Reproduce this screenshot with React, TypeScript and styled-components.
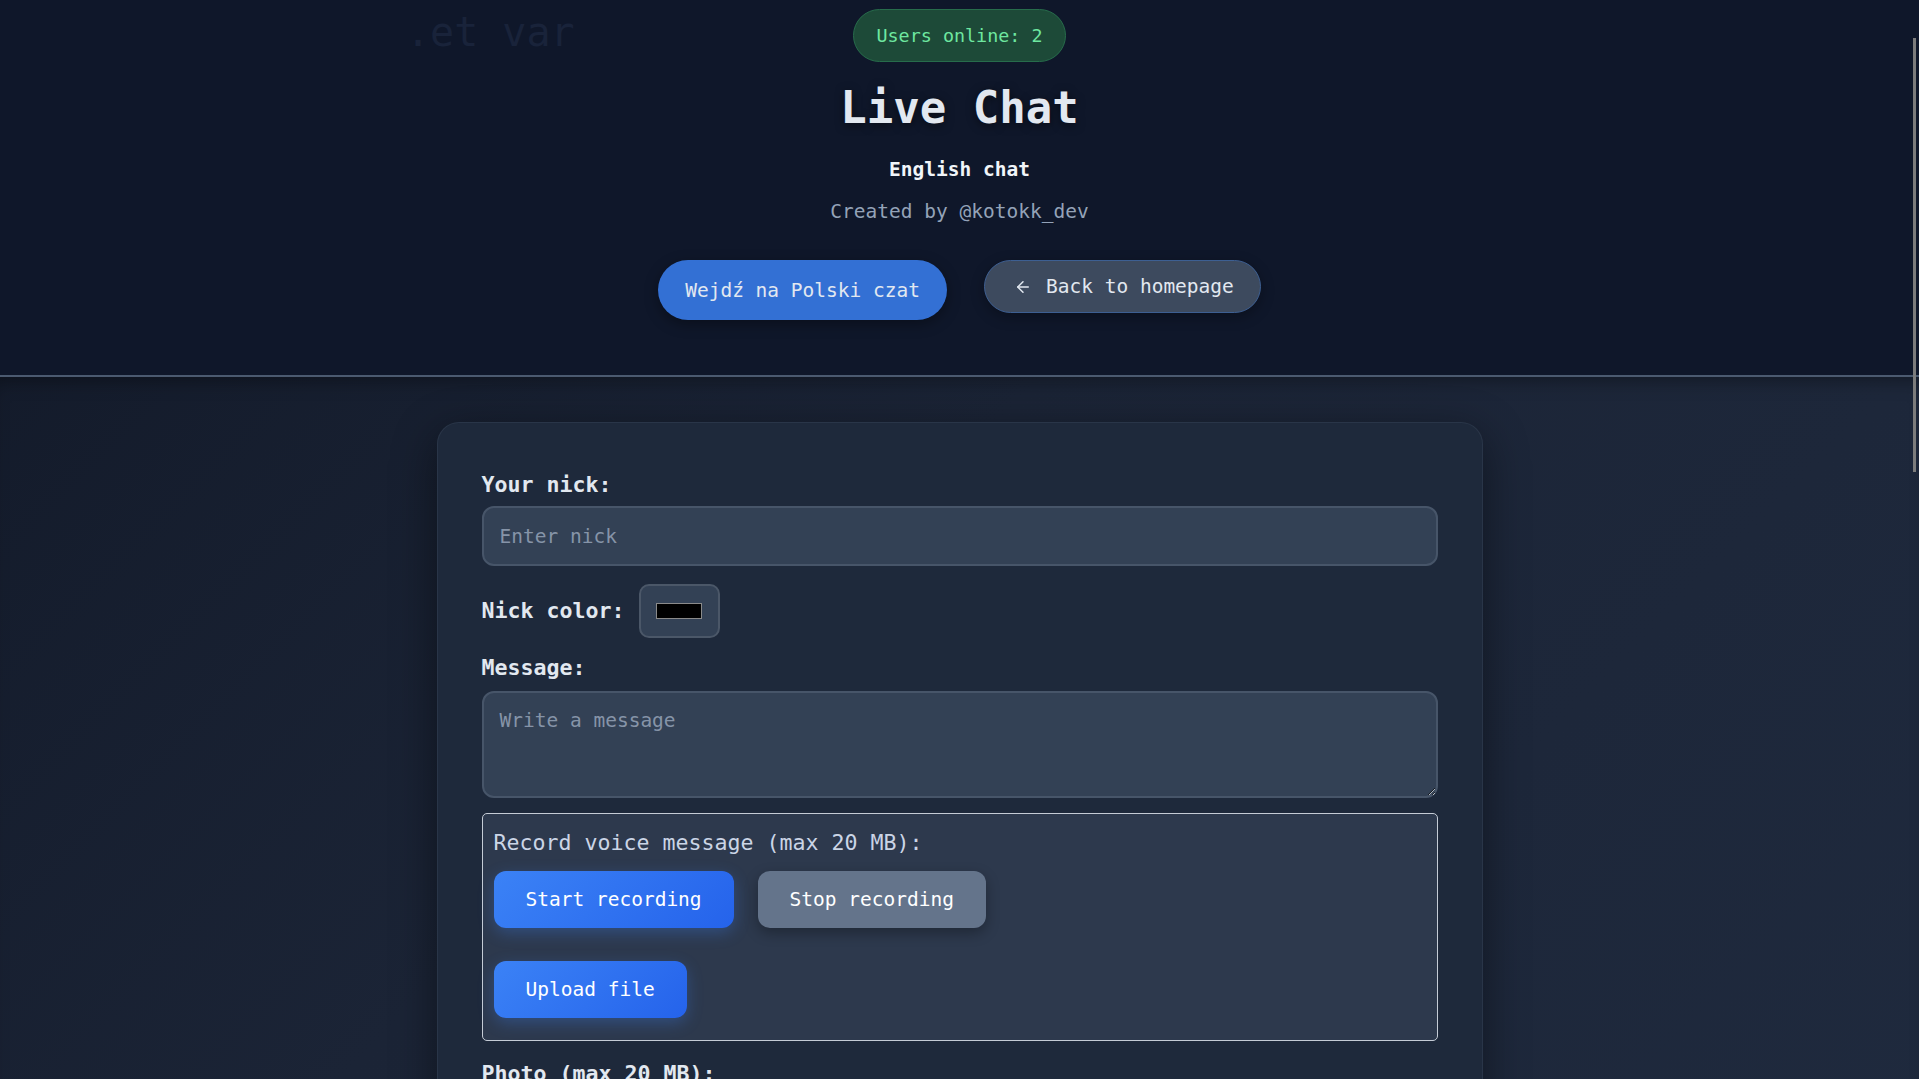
import React from "react";
import styled, { createGlobalStyle } from "styled-components";
import { ArrowLeft } from "lucide-react";

const GlobalStyle = createGlobalStyle`
  html, body {
    margin: 0;
    padding: 0;
    scrollbar-width: none;
  }
  html::-webkit-scrollbar, body::-webkit-scrollbar { display: none; width: 0; }
  body {
    background: linear-gradient(135deg, #111827 0%, #1b2436 45%, #1f2a3e 100%);
    font-family: "DejaVu Sans Mono", "Liberation Mono", monospace;
    color: #e2e8f0;
  }
  * { box-sizing: border-box; }
`;

const Header = styled.header`
  position: relative;
  background: #0f172a;
  height: 377px;
  border-bottom: 2px solid #4b5a70;
  display: flex;
  flex-direction: column;
  align-items: center;
  padding-top: 9px;
  overflow: hidden;
`;

const GhostCode = styled.div`
  position: absolute;
  left: 406px;
  top: 5px;
  font-size: 40px;
  line-height: 54px;
  color: #19233a;
  white-space: pre;
  pointer-events: none;
`;

const OnlineBadge = styled.div`
  height: 53px;
  padding: 0 22px;
  border-radius: 27px;
  background: #1d4a38;
  border: 1px solid #276c4b;
  color: #6ee7a0;
  font-size: 18.4px;
  line-height: 51px;
  position: relative;
`;

const Title = styled.h1`
  margin: 21px 0 0;
  font-size: 44px;
  line-height: 50px;
  font-weight: 700;
  color: #e2e8f0;
  text-shadow: 0 2px 10px rgba(0, 0, 0, 0.55);
`;

const Subtitle = styled.div`
  margin-top: 25px;
  font-size: 19.5px;
  line-height: 24px;
  font-weight: 700;
  color: #f1f5f9;
`;

const Credit = styled.div`
  margin-top: 18px;
  font-size: 19.5px;
  line-height: 24px;
  color: #94a3b8;
`;

const NavRow = styled.div`
  margin-top: 36px;
  display: flex;
  align-items: flex-start;
  gap: 37px;
`;

const PillButton = styled.button<{ $variant: "primary" | "ghost" }>`
  font-family: inherit;
  font-size: 19.5px;
  display: flex;
  align-items: center;
  gap: 14px;
  cursor: pointer;
  color: #e2e8f0;
  border-radius: 30px;
  ${(p) =>
    p.$variant === "primary"
      ? `
    height: 60px;
    padding: 0 27px;
    background: #3370d4;
    border: none;
    box-shadow: 0 4px 14px rgba(0,0,0,0.35);
  `
      : `
    height: 53px;
    padding: 0 26px 0 29px;
    background: #3d4a5e;
    border: 1px solid #3d5f92;
    box-shadow: 0 4px 14px rgba(0,0,0,0.3);
  `}
`;

const Main = styled.main`
  display: flex;
  justify-content: center;
  padding: 45px 0 60px;
  box-shadow: inset 0 14px 18px -10px rgba(0, 0, 0, 0.35);
`;

const Card = styled.section`
  width: 1046px;
  background: #1e293b;
  border: 1px solid rgba(148, 163, 184, 0.1);
  border-radius: 22px;
  padding: 49px 44px 45px;
  box-shadow: 0 12px 45px rgba(0, 0, 0, 0.45);
  display: flex;
  flex-direction: column;
`;

const Label = styled.label<{ $gap?: number; $after?: number }>`
  display: block;
  font-size: 21.6px;
  line-height: 26px;
  font-weight: 700;
  color: #e2e8f0;
  margin-top: ${(p) => p.$gap ?? 0}px;
  margin-bottom: ${(p) => p.$after ?? 8}px;
`;

const TextInput = styled.input`
  width: 100%;
  height: 60px;
  background: #334155;
  border: 2px solid #475569;
  border-radius: 12px;
  padding: 0 16px;
  font-family: inherit;
  font-size: 19.5px;
  color: #e2e8f0;
  &::placeholder { color: #8694a8; }
  outline: none;
`;

const ColorRow = styled.div`
  margin-top: 18px;
  display: flex;
  align-items: center;
  gap: 14px;
`;

const InlineLabel = styled.span`
  font-size: 21.6px;
  line-height: 26px;
  font-weight: 700;
  color: #e2e8f0;
`;

const ColorBox = styled.div`
  width: 81px;
  height: 54px;
  background: #334155;
  border: 2px solid #4b5768;
  border-radius: 10px;
  display: flex;
  align-items: center;
  justify-content: center;
`;

const Swatch = styled.div<{ $color: string }>`
  width: 46px;
  height: 16px;
  background: ${(p) => p.$color};
  border: 1px solid #8a8a8a;
`;

const TextArea = styled.textarea`
  width: 100%;
  height: 107px;
  background: #334155;
  border: 2px solid #475569;
  border-radius: 12px;
  padding: 16px 16px;
  font-family: inherit;
  font-size: 19.5px;
  line-height: 24px;
  color: #e2e8f0;
  &::placeholder { color: #8694a8; }
  outline: none;
  resize: vertical;
  display: block;
`;

const VoiceBox = styled.div`
  margin-top: 15px;
  background: #2d394d;
  border: 1px solid #c5ccd6;
  border-radius: 5px;
  padding: 16px 11px 22px;
  display: flex;
  flex-direction: column;
`;

const VoiceTitle = styled.div`
  font-size: 21.6px;
  line-height: 26px;
  color: #cbd5e6;
`;

const ButtonRow = styled.div<{ $top: number }>`
  margin-top: ${(p) => p.$top}px;
  display: flex;
  gap: 24px;
`;

const ActionButton = styled.button<{ $tone: "blue" | "gray" }>`
  height: 57px;
  padding: 0 32px;
  border: none;
  border-radius: 12px;
  font-family: inherit;
  font-size: 19.5px;
  color: #ffffff;
  cursor: pointer;
  background: ${(p) =>
    p.$tone === "blue"
      ? "linear-gradient(135deg, #3b82f6 0%, #2563eb 100%)"
      : "#64748b"};
  box-shadow: ${(p) =>
    p.$tone === "blue"
      ? "0 5px 16px rgba(59, 130, 246, 0.3)"
      : "0 5px 14px rgba(0, 0, 0, 0.3)"};
`;

const HiddenFile = styled.input`
  display: none;
`;

const FileRow = styled.div`
  margin-top: 10px;
  font-size: 19.5px;
  color: #cbd5e1;
`;

const ScrollThumb = styled.div`
  position: fixed;
  top: 38px;
  right: 3px;
  width: 3px;
  height: 434px;
  background: #7c7c7c;
  z-index: 10;
`;

export default function App() {
  return (
    <>
      <GlobalStyle />
      <ScrollThumb />
      <Header>
        <GhostCode>.et var</GhostCode>
        <OnlineBadge>Users online: 2</OnlineBadge>
        <Title>Live Chat</Title>
        <Subtitle>English chat</Subtitle>
        <Credit>Created by @kotokk_dev</Credit>
        <NavRow>
          <PillButton $variant="primary">Wejdź na Polski czat</PillButton>
          <PillButton $variant="ghost">
            <ArrowLeft size={18} strokeWidth={2} />
            Back to homepage
          </PillButton>
        </NavRow>
      </Header>
      <Main>
        <Card>
          <Label htmlFor="nick">Your nick:</Label>
          <TextInput id="nick" placeholder="Enter nick" />
          <ColorRow>
            <InlineLabel>Nick color:</InlineLabel>
            <ColorBox>
              <Swatch $color="#000000" />
            </ColorBox>
          </ColorRow>
          <Label htmlFor="msg" $gap={17} $after={10}>
            Message:
          </Label>
          <TextArea id="msg" placeholder="Write a message" />
          <VoiceBox>
            <VoiceTitle>Record voice message (max 20 MB):</VoiceTitle>
            <ButtonRow $top={15}>
              <ActionButton $tone="blue">Start recording</ActionButton>
              <ActionButton $tone="gray">Stop recording</ActionButton>
            </ButtonRow>
            <ButtonRow $top={33}>
              <ActionButton $tone="blue">Upload file</ActionButton>
              <HiddenFile type="file" />
            </ButtonRow>
          </VoiceBox>
          <Label $gap={20}>Photo (max 20 MB):</Label>
          <FileRow>No file chosen</FileRow>
        </Card>
      </Main>
    </>
  );
}
